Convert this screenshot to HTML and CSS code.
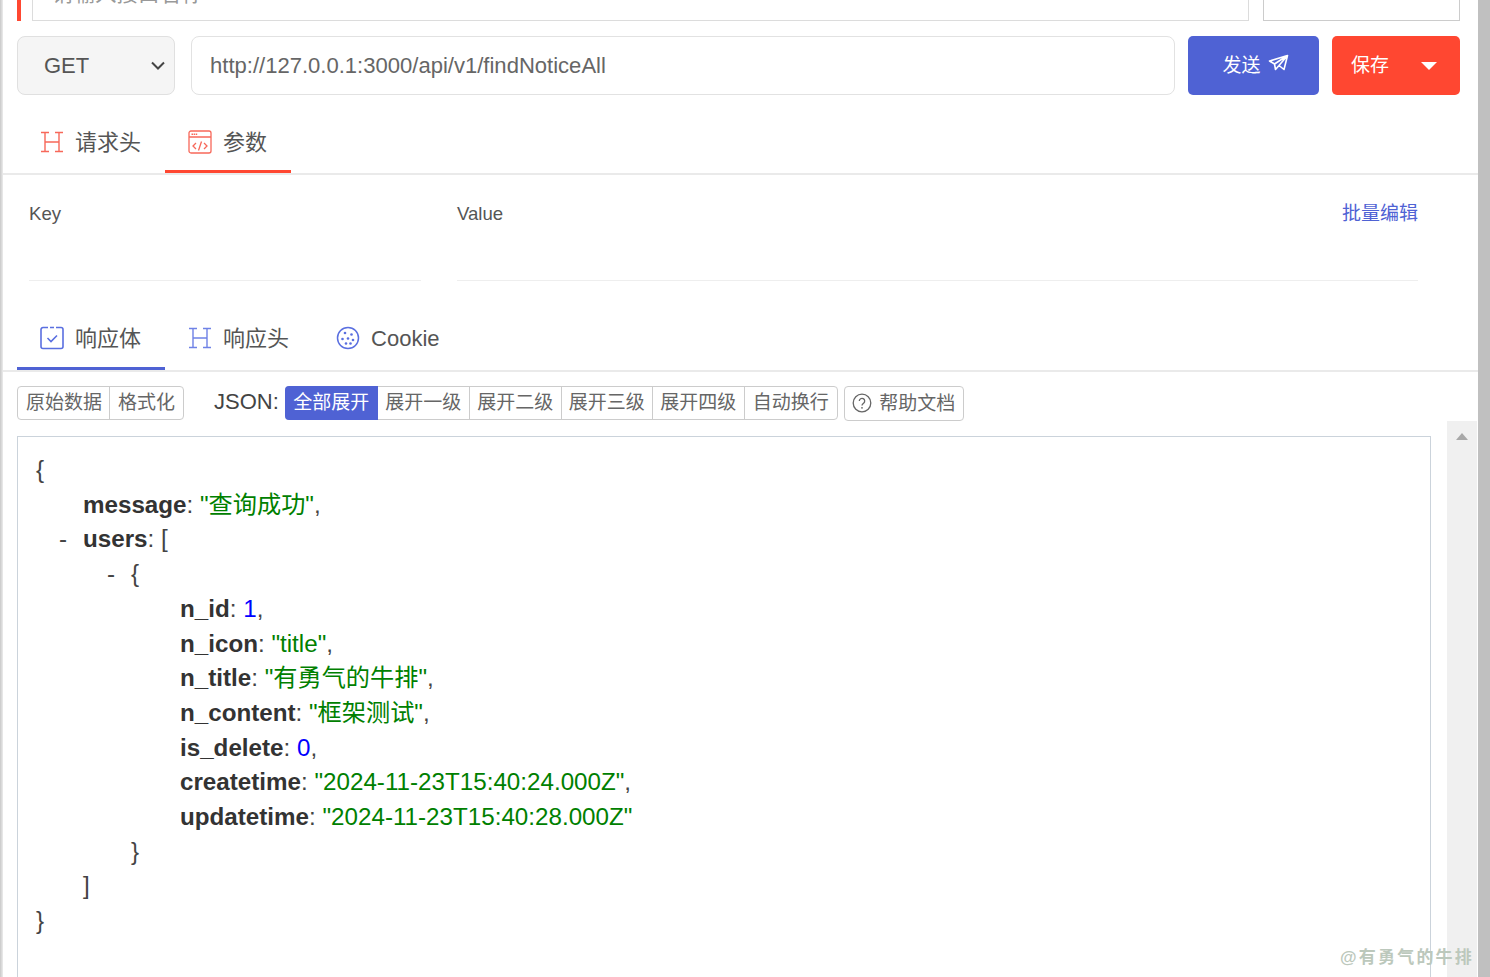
FILE: index.html
```html
<!DOCTYPE html>
<html lang="zh-CN">
<head>
<meta charset="utf-8">
<title>接口调试</title>
<link rel="stylesheet" href="styles.css">
</head>
<body>
<div class="app">
  <div class="edge"></div>
  <main class="main">
    <div class="name-row">
      <span class="mark"></span>
      <div class="name-input"><span class="placeholder">请输入接口名称</span></div>
      <div class="group-input"></div>
    </div>
    <div class="url-row">
      <div class="method">GET
        <svg class="chev" width="16" height="9" viewBox="0 0 16 9"><path d="M2 1.5l6 6 6-6" fill="none" stroke="#444" stroke-width="2"/></svg>
      </div>
      <div class="url">http://127.0.0.1:3000/api/v1/findNoticeAll</div>
      <div class="send">发送
        <svg width="21" height="18" viewBox="0 0 21 18"><path d="M1.500 7L19.500 1.500L16 15.500L11 11.500L7.500 15.500L6.500 10ZM6.500 10L19.500 1.500L11 11.500" fill="none" stroke="#fff" stroke-width="1.600" stroke-linejoin="round"/></svg>
      </div>
      <div class="save"><span class="save-text">保存</span><i class="caret"></i></div>
    </div>
    <div class="tabs req-tabs">
      <div class="tab">
        <svg class="ico" width="24" height="24" viewBox="0 0 24 24"><path d="M1 2.500h8M5 2.500v19M1 21.500h8M15 2.500h8M19 2.500v19M15 21.500h8M5 12h14" fill="none" stroke="#f7685a" stroke-width="1.400"/></svg>
        请求头
      </div>
      <div class="tab red-on">
        <svg class="ico" width="24" height="24" viewBox="0 0 24 24"><rect x="1" y="1" width="22" height="22" rx="2" fill="none" stroke="#f7685a" stroke-width="1.300"/><path d="M1 7h22M8 13l-3 3 3 3M16 13l3 3-3 3M13.500 11.500l-3 9" fill="none" stroke="#f7685a" stroke-width="1.300"/><path d="M3.500 4.200h6" stroke="#f7685a" stroke-width="1.600" stroke-dasharray="1.500 .6"/></svg>
        参数
      </div>
    </div>
    <div class="params">
      <div class="col-key"><div class="col-head">Key</div><div class="cell"></div></div>
      <div class="col-value">
        <div class="col-head value-head"><span>Value</span><a class="batch">批量编辑</a></div>
        <div class="cell"></div>
      </div>
    </div>
    <div class="tabs res-tabs">
      <div class="tab tab-cn blue-on">
        <svg class="ico" width="24" height="24" viewBox="0 0 24 24"><path d="M8 1.500H3a2 2 0 0 0-2 2v17a2 2 0 0 0 2 2h18a2 2 0 0 0 2-2v-17a2 2 0 0 0-2-2h-5M10 1.500h4" fill="none" stroke="#5a6fe0" stroke-width="1.600"/><path d="M7.500 12l3.500 3.500 6-6" fill="none" stroke="#5a6fe0" stroke-width="1.600"/></svg>
        响应体
      </div>
      <div class="tab tab-cn">
        <svg class="ico" width="24" height="24" viewBox="0 0 24 24"><path d="M1 2.500h8M5 2.500v19M1 21.500h8M15 2.500h8M19 2.500v19M15 21.500h8M5 12h14" fill="none" stroke="#6f82e6" stroke-width="1.400"/></svg>
        响应头
      </div>
      <div class="tab">
        <svg class="ico" width="24" height="24" viewBox="0 0 24 24"><circle cx="12" cy="12" r="10.500" fill="none" stroke="#5a6fe0" stroke-width="1.500"/><g fill="#5a6fe0"><circle cx="9" cy="7" r="1.300"/><circle cx="15.500" cy="8.500" r="1.300"/><circle cx="6.500" cy="13" r="1.300"/><circle cx="12" cy="12.500" r="1.300"/><circle cx="17" cy="14" r="1.300"/><circle cx="10" cy="17.500" r="1.300"/><circle cx="14.500" cy="17.500" r="1.300"/></g></svg>
        Cookie
      </div>
    </div>
    <div class="toolbar">
      <div class="btn-group">
        <span class="btn w92 first">原始数据</span><span class="btn w74">格式化</span>
      </div>
      <span class="json-label">JSON:</span>
      <div class="btn-group">
        <span class="btn active w93">全部展开</span><span class="btn w92">展开一级</span><span class="btn w92">展开二级</span><span class="btn w91">展开三级</span><span class="btn w92">展开四级</span><span class="btn w92">自动换行</span>
      </div>
      <span class="btn help">
        <svg width="20" height="20" viewBox="0 0 20 20"><circle cx="10" cy="10" r="8.800" fill="none" stroke="#666" stroke-width="1.300"/><path d="M7.300 8a2.700 2.700 0 1 1 4.300 2.200c-1 .7-1.600 1.100-1.600 2.300" fill="none" stroke="#666" stroke-width="1.300"/><circle cx="10" cy="14.800" r=".9" fill="#666"/></svg>
        帮助文档
      </span>
    </div>
    <div class="result">
      <div class="json">
        <div class="l0">{</div>
        <div class="l1"><b>message</b>: <span class="s">"查询成功"</span>,</div>
        <div class="l1"><i class="tog">-</i><b>users</b>: [</div>
        <div class="l2"><i class="tog">-</i>{</div>
        <div class="l3"><b>n_id</b>: <span class="n">1</span>,</div>
        <div class="l3"><b>n_icon</b>: <span class="s">"title"</span>,</div>
        <div class="l3"><b>n_title</b>: <span class="s">"有勇气的牛排"</span>,</div>
        <div class="l3"><b>n_content</b>: <span class="s">"框架测试"</span>,</div>
        <div class="l3"><b>is_delete</b>: <span class="n">0</span>,</div>
        <div class="l3"><b>createtime</b>: <span class="s">"2024-11-23T15:40:24.000Z"</span>,</div>
        <div class="l3"><b>updatetime</b>: <span class="s">"2024-11-23T15:40:28.000Z"</span></div>
        <div class="l2">}</div>
        <div class="l1">]</div>
        <div class="l0">}</div>
      </div>
      <div class="inner-scroll"><i class="up"></i></div>
    </div>
  </main>
  <div class="page-scroll"></div>
</div>
<div class="watermark">@有勇气的牛排</div>
</body>
</html>
```
FILE: styles.css
```css
* { box-sizing: border-box; }
html, body { margin: 0; height: 100%; overflow: hidden; }
body {
  font-family: "Liberation Sans", "Noto Sans CJK SC", sans-serif;
  color: #555;
  background: #fff;
}
.app { display: flex; height: 977px; position: relative; }
.edge { width: 3px; flex: none; background: linear-gradient(90deg, #c8c8c8, #ececec); }
.main { flex: none; width: 1475px; display: flex; flex-direction: column; overflow: hidden; }
.page-scroll { flex: 1; background: #c0c0c0; }

.name-row { height: 21px; flex: none; display: flex; padding: 0 17px 0 14px; }
.mark { width: 4px; background: #ff4731; margin-right: 11px; }
.name-input {
  width: 1217px; border: 1px solid #dcdcdc; border-top: 0;
  padding-left: 19px; overflow: hidden; display: flex; align-items: flex-end;
}
.placeholder { font-size: 21.500px; line-height: 30px; color: #999; margin-bottom: 11px; white-space: nowrap; }
.group-input { width: 197px; margin-left: 14px; border: 1px solid #ccc; border-top: 0; }

.url-row { display: flex; height: 59px; margin-top: 15px; padding: 0 17px 0 14px; flex: none; }
.method {
  width: 158px; background: #f5f5f5; border: 1px solid #e0e0e0; border-radius: 8px;
  font-size: 22px; color: #555; display: flex; align-items: center; justify-content: space-between;
  padding: 0 8px 0 26px;
}
.url {
  width: 984px; margin-left: 16px; border: 1px solid #e2e2e2; border-radius: 8px;
  font-size: 22.050px; color: #666; display: flex; align-items: center; padding-left: 18px;
}
.send {
  width: 131px; margin-left: 13px; background: #4f62d4; border-radius: 5px; color: #fff;
  font-size: 19px; display: flex; align-items: center; justify-content: center; gap: 7px;
  padding: 0 0 5px 4px;
}
.save {
  width: 128px; margin-left: 13px; background: #ff4731; border-radius: 5px; color: #fff;
  font-size: 19px; display: flex; align-items: center; padding: 0 23px 0 19px; justify-content: space-between;
}
.save-text { margin-bottom: 4px; }
.caret { width: 0; height: 0; border: 8px solid transparent; border-top: 8px solid #fff; border-bottom: 0; }

.tabs { display: flex; flex: none; padding-left: 14px; border-bottom: 2px solid #eaeaea; }
.req-tabs { margin-top: 18px; height: 62px; }
.res-tabs { height: 53px; }
.tab {
  display: flex; align-items: center; gap: 11px; padding: 0 24px 3px 23px;
  font-size: 22px; color: #555; height: 100%;
  border-bottom: 3px solid transparent;
}
.res-tabs .tab { padding-bottom: 9px; }
.res-tabs .tab-cn { padding-bottom: 14px; }
.ico { flex: none; }
.req-tabs .ico { margin-top: 3px; }
.res-tabs .ico { margin-top: -2px; }
.res-tabs .tab-cn .ico { margin-top: 3px; }
.red-on { border-bottom-color: #ff4731; }
.blue-on { border-bottom-color: #4f62d4; }

.params { display: flex; height: 144px; flex: none; padding-left: 26px; padding-right: 60px; }
.col-key { width: 392px; }
.col-value { margin-left: 36px; flex: 1; }
.col-head { height: 67px; padding-top: 27px; font-size: 18.600px; line-height: 24px; color: #555; }
.value-head { display: flex; justify-content: space-between; }
.batch { font-size: 19px; color: #4f62d4; }
.cell { height: 39px; border-bottom: 1px solid #eee; }

.toolbar { display: flex; align-items: flex-start; padding: 14px 0 0 14px; height: 64px; flex: none; }
.btn-group { display: flex; height: 34px; border: 1px solid #ccc; border-radius: 4px; }
.btn {
  display: flex; align-items: center; justify-content: center; padding-bottom: 5px;
  font-size: 19px; color: #666; border-right: 1px solid #ccc; white-space: nowrap;
}
.btn:last-child { border-right: 0; }
.btn.first { padding-left: 1px; }
.btn-group .btn.active { background: #4f62d4; color: #fff; margin: -1px 0 -1px -1px; border-radius: 4px 0 0 4px; border: 0; }
.w93 { width: 93px; } .w92 { width: 92px; } .w91 { width: 91px; } .w74 { width: 73px; }
.json-label { font-size: 22px; line-height: 30px; color: #444; margin: 1px 6px 0 30px; }
.btn.help { width: 120px; height: 35px; margin-left: 6px; border: 1px solid #ccc; border-radius: 4px; gap: 7px; }
.btn.help svg { margin-top: 3px; }

.result { display: flex; align-items: flex-start; flex: 1; min-height: 0; padding-left: 14px; }
.json {
  width: 1414px; height: 560px; border: 1px solid #cbd3db; border-bottom: 0;
  padding: 16px 0 0 18px; font-size: 24.200px; line-height: 34.700px; color: #444;
}
.json b { color: #333; }
.json .s { color: #008000; }
.json .n { color: #0000ff; }
.tog { display: inline-block; font-style: normal; width: 24px; margin-left: -24px; }
.l1 { padding-left: 47px; }
.l2 { padding-left: 95px; }
.l3 { padding-left: 144px; }
.inner-scroll { width: 30px; height: 560px; margin: -15px 0 0 16px; background: #f0f0f0; display: flex; justify-content: center; padding-top: 12px; }
.up { width: 0; height: 0; border: 6.500px solid transparent; border-bottom: 7px solid #a8a8a8; border-top: 0; }

.watermark {
  position: absolute; left: 1340px; top: 947px; font-size: 17px; line-height: 22px; font-weight: 700;
  letter-spacing: 2.200px; color: #bcc8bc; white-space: nowrap;
}
```
